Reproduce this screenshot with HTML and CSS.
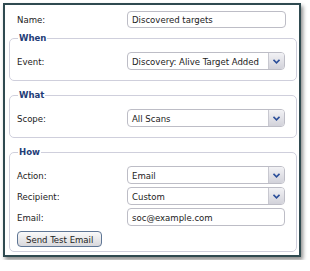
FILE: index.html
```html
<!DOCTYPE html>
<html lang="en">
<head>
  <meta charset="UTF-8">
  <title>Alert Rule</title>
  <link rel="stylesheet" href="styles.css">
</head>
<body>
  <div class="panel">
    <div class="row top-row">
      <label>Name:</label>
      <div class="field">Discovered targets</div>
    </div>

    <fieldset>
      <legend>When</legend>
      <div class="row">
        <label>Event:</label>
        <div class="select"><span class="value">Discovery: Alive Target Added</span><span class="arrow"><svg width="7" height="5" viewBox="0 0 7 5"><path d="M0.5 0.8 L3.5 3.8 L6.5 0.8" fill="none" stroke="#2c4f9a" stroke-width="1.6"/></svg></span></div>
      </div>
    </fieldset>

    <fieldset>
      <legend>What</legend>
      <div class="row">
        <label>Scope:</label>
        <div class="select"><span class="value">All Scans</span><span class="arrow"><svg width="7" height="5" viewBox="0 0 7 5"><path d="M0.5 0.8 L3.5 3.8 L6.5 0.8" fill="none" stroke="#2c4f9a" stroke-width="1.6"/></svg></span></div>
      </div>
    </fieldset>

    <fieldset class="how">
      <legend>How</legend>
      <div class="row">
        <label>Action:</label>
        <div class="select"><span class="value">Email</span><span class="arrow"><svg width="7" height="5" viewBox="0 0 7 5"><path d="M0.5 0.8 L3.5 3.8 L6.5 0.8" fill="none" stroke="#2c4f9a" stroke-width="1.6"/></svg></span></div>
      </div>
      <div class="row">
        <label>Recipient:</label>
        <div class="select"><span class="value">Custom</span><span class="arrow"><svg width="7" height="5" viewBox="0 0 7 5"><path d="M0.5 0.8 L3.5 3.8 L6.5 0.8" fill="none" stroke="#2c4f9a" stroke-width="1.6"/></svg></span></div>
      </div>
      <div class="row">
        <label>Email:</label>
        <div class="field">soc@example.com</div>
      </div>
      <button>Send Test Email</button>
    </fieldset>
  </div>
</body>
</html>
```

FILE: styles.css
```css
body {
  margin: 0;
  padding: 3px;
  background: #fff;
  font-family: "DejaVu Sans Condensed", "DejaVu Sans", sans-serif;
  font-size: 9.5px;
  color: #222;
}
.panel {
  width: 294px;
  height: 250px;
  border: 2px solid #2f4a50;
  box-shadow: 2px 3px 4px rgba(0, 0, 0, 0.45);
  background: #fff;
}
.row {
  display: flex;
  align-items: center;
  height: 18px;
}
.row label {
  width: 110px;
  flex: none;
}
.top-row {
  height: 17px;
  margin: 6px 13px 0 12px;
}
fieldset {
  margin: 8px 2px 0 4px;
  padding: 8px 11px 10px 7px;
  border: 1px solid #cfcfdc;
  border-radius: 5px;
}
.top-row + fieldset {
  margin-top: 4px;
}
legend {
  padding: 0 1px;
  margin-left: 1px;
  font-weight: bold;
  color: #1f3d78;
  line-height: 12px;
}
.field, .select {
  flex: 1;
  height: 100%;
  box-sizing: border-box;
  border: 1px solid #bdbdc6;
  border-radius: 4px;
  background: #fff;
  display: flex;
  align-items: center;
}
.field {
  padding-left: 4px;
}
.select .value {
  flex: 1;
  padding-left: 4px;
}
.select .arrow {
  width: 15px;
  height: 100%;
  border-left: 1px solid #c8c8d0;
  border-radius: 0 3px 3px 0;
  background: linear-gradient(#f2f2f5, #d2d2da);
  display: flex;
  align-items: center;
  justify-content: center;
}
.how {
  padding-bottom: 4px;
}
.how .row + .row {
  margin-top: 3px;
}
button {
  margin-top: 5px;
  height: 16px;
  padding: 0 8px;
  font: inherit;
  color: #222;
  border: 1px solid #5f7695;
  border-radius: 4px;
  background: linear-gradient(#fafafa, #d8d8dc);
}
```
